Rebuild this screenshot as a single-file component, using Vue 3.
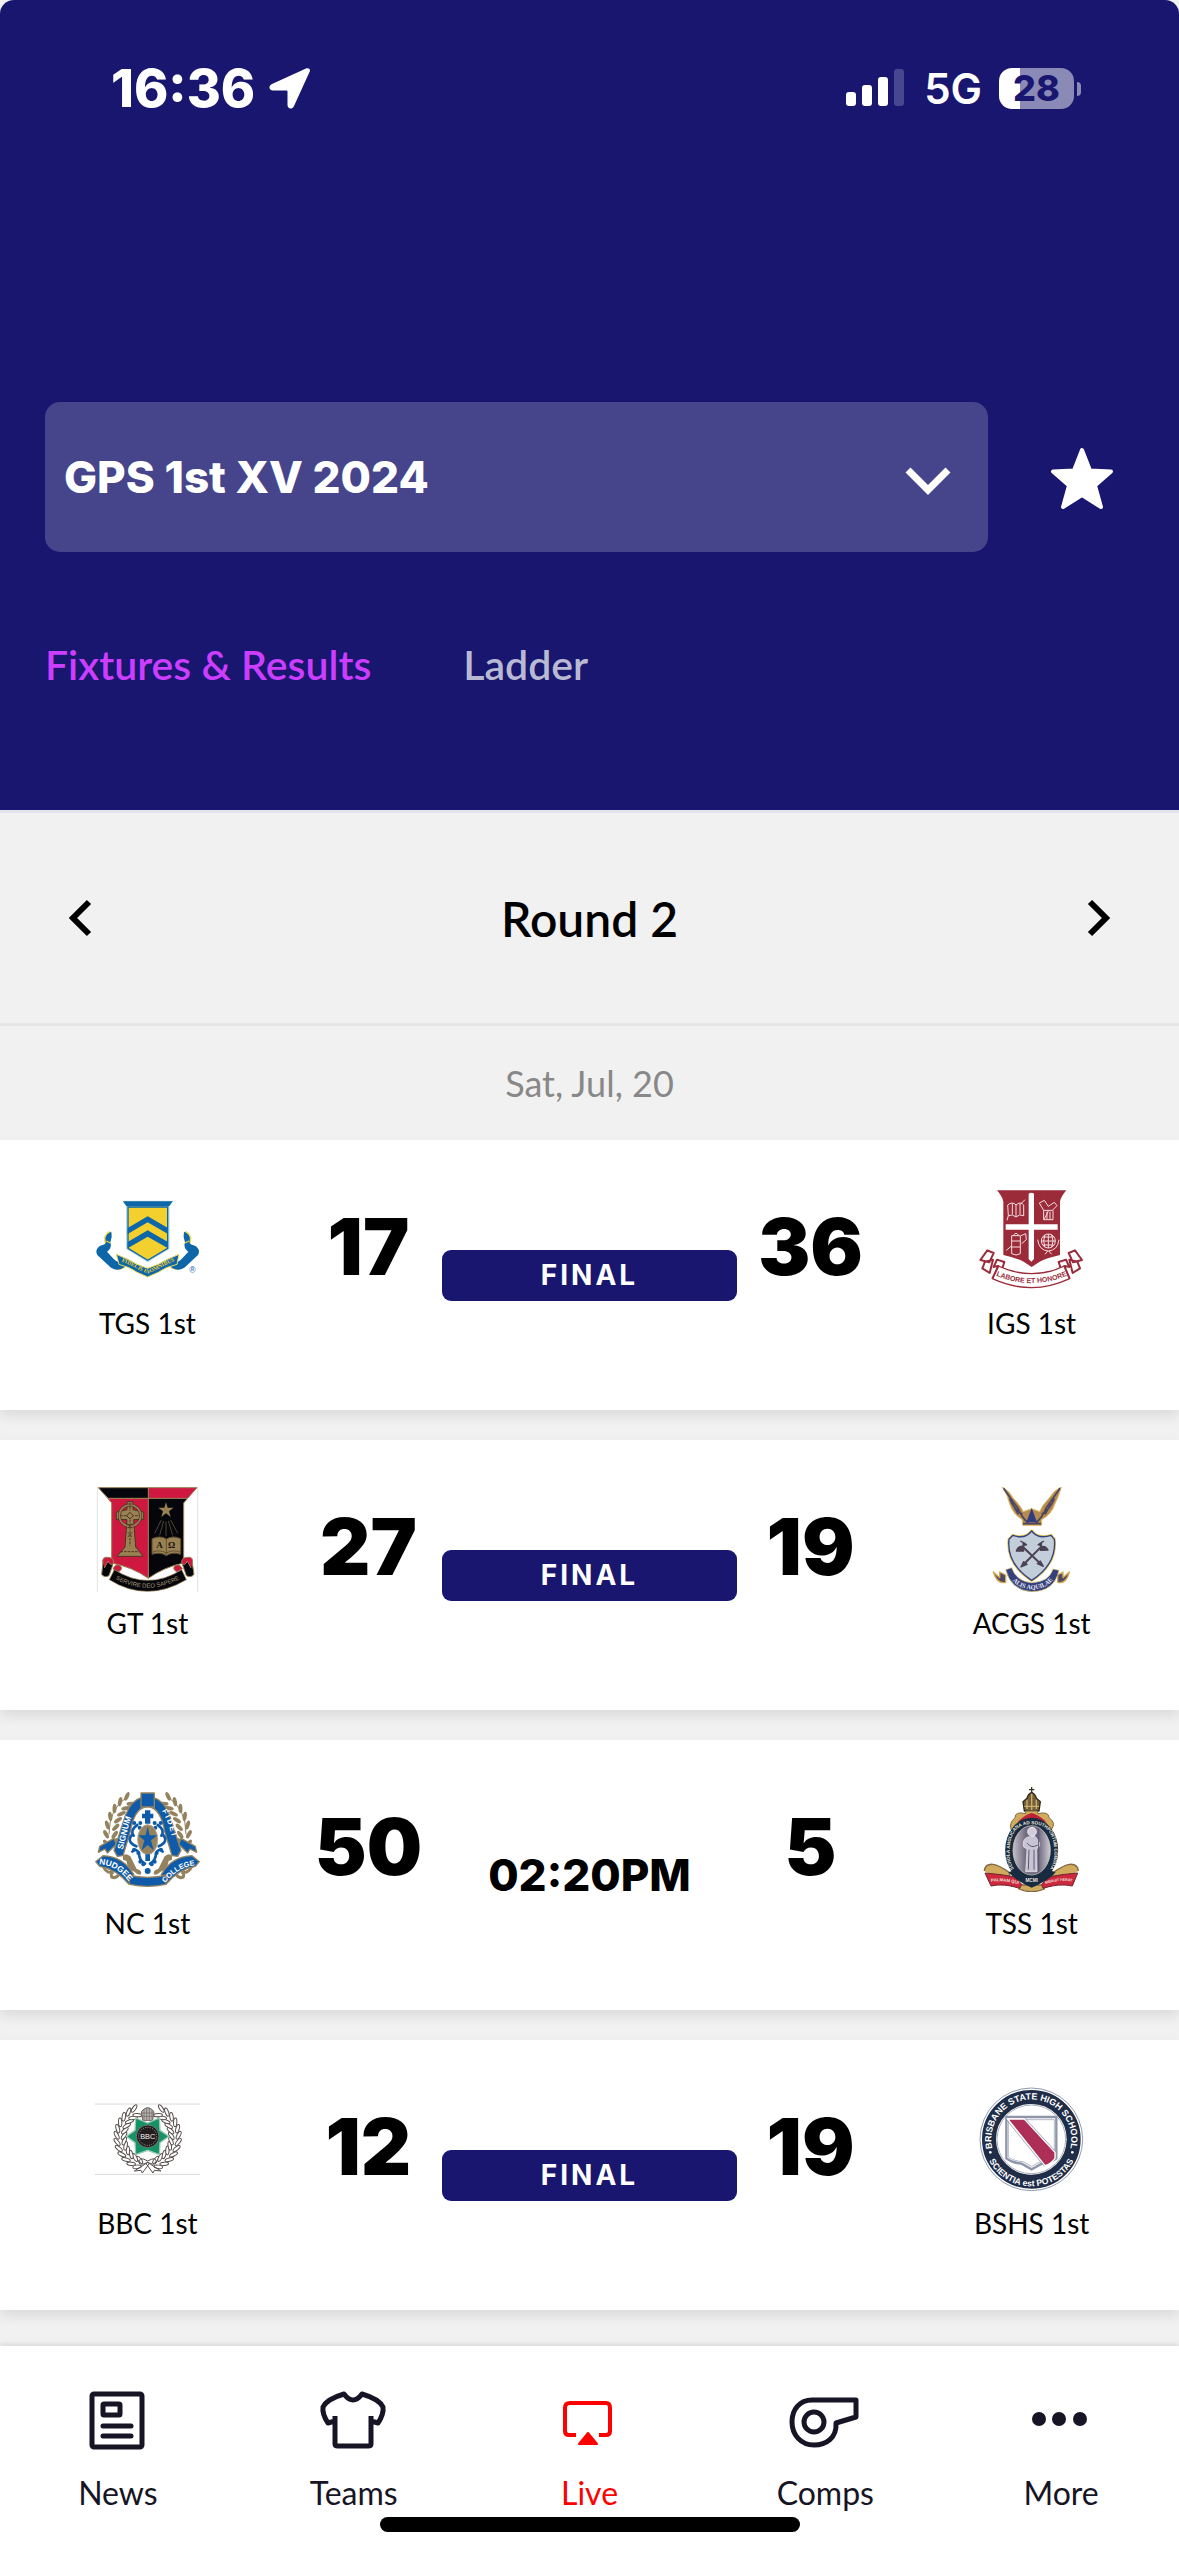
<script setup>
import { ref } from 'vue'

const competition = ref('GPS 1st XV 2024')

const fixtures = [
  { home: 'TGS', away: 'IGS', homeScore: 17, awayScore: 36, final: true },
  { home: 'GT', away: 'ACGS', homeScore: 27, awayScore: 19, final: true },
  { home: 'NC', away: 'TSS', homeScore: 50, awayScore: 5, final: false, time: '02:20PM' },
  { home: 'BBC', away: 'BSHS', homeScore: 12, awayScore: 19, final: true },
]

const navItems = ['News', 'Teams', 'Live', 'Comps', 'More']

// Leaves along an elliptical arc, alternating inside and outside of the stem.
function leaves(cx, cy, rx, ry, from, to, count, spread, lean) {
  const list = []
  for (let i = 0; i < count; i++) {
    const deg = from + ((to - from) * i) / (count - 1)
    const a = (deg * Math.PI) / 180
    const dir = Math.atan2(ry * Math.cos(a), -rx * Math.sin(a)) * (180 / Math.PI)
    for (const side of [-1, 1]) {
      const x = cx + (rx + side * spread) * Math.cos(a)
      const y = cy + (ry + side * spread) * Math.sin(a)
      list.push(`translate(${x.toFixed(1)} ${y.toFixed(1)}) rotate(${(dir - side * lean).toFixed(1)})`)
    }
  }
  return list
}
const nudgeeLeaves = leaves(158, 150, 112, 128, 172, 240, 7, 13, 32)
const bbcLeaves = leaves(158, 150, 82, 84, 110, 244, 12, 11, 30)
</script>

<template>
  <div class="app">
    <header class="header">
      <div class="status">
        <div class="status-left">
          <span class="clock">16:36</span>
          <svg class="location" viewBox="0 0 42 42" aria-hidden="true">
            <path d="M37 1.500 L3 17 C-1 19 0 23.500 4 23.500 L17.500 23.500 Q18.500 23.500 18.500 24.500 L18.500 38 C18.500 42 23 43 25 39 L40.500 5 C42 2 39.500 .5 37 1.500Z" fill="#fff" />
          </svg>
        </div>
        <div class="status-right">
          <svg class="signal" viewBox="0 0 58 38" aria-hidden="true">
            <rect x="0" y="23" width="10" height="14" rx="3" fill="#fff" />
            <rect x="16" y="16" width="10" height="21" rx="3" fill="#fff" />
            <rect x="32" y="8" width="10" height="29" rx="3" fill="#fff" />
            <rect x="48" y="0" width="10" height="37" rx="3" fill="#474790" />
          </svg>
          <span class="network">5G</span>
          <div class="battery"><span>28</span></div>
        </div>
      </div>

      <div class="picker-row">
        <div class="picker">
          <select v-model="competition" aria-label="Competition">
            <option>GPS 1st XV 2024</option>
          </select>
          <svg viewBox="0 0 46 30" aria-hidden="true"><path d="M3 4 L23 24 L43 4" fill="none" stroke="#fff" stroke-width="7" /></svg>
        </div>
        <button class="star" aria-label="Favourite">
          <svg viewBox="0 -2 64 64"><path d="M32 3 L40 23.500 L61 24.500 L45 38.500 L51 60 L32 48 L13 60 L19 38.500 L3 24.500 L24 23.500Z" fill="#fff" stroke="#fff" stroke-width="4" stroke-linejoin="round" /></svg>
        </button>
      </div>

      <nav class="tabs" aria-label="Sections">
        <a href="#fixtures" class="active">Fixtures &amp; Results</a>
        <a href="#ladder">Ladder</a>
      </nav>
    </header>

    <main>
      <div class="round">
        <button aria-label="Previous round"><svg viewBox="0 0 24 38"><path d="M21 3 L5 19 L21 35" fill="none" stroke="#000" stroke-width="6" /></svg></button>
        <h1>Round 2</h1>
        <button aria-label="Next round"><svg viewBox="0 0 24 38"><path d="M3 3 L19 19 L3 35" fill="none" stroke="#000" stroke-width="6" /></svg></button>
      </div>
      <p class="date">Sat, Jul, 20</p>

      <article v-for="m in fixtures" :key="m.home" class="card">
        <template v-for="side in ['home', 'away']" :key="side">
          <div class="team" :class="side">
            <svg class="crest" viewBox="0 0 315 315" aria-hidden="true">
              <g v-if="m[side] === 'TGS'">
                <g stroke="#f0dc5a" stroke-width="15" stroke-linejoin="round" fill="none">
                  <path d="M48 138 C25 150 38 164 38 176 L14 192 L56 236 Q74 248 90 232" />
                  <path d="M268 138 C291 150 278 164 278 176 L302 192 L260 236 Q242 248 226 232" />
                </g>
                <path d="M49 134 Q28 142 32 162 Q36 172 16 176 Q-2 188 7 204 L48 242 Q70 256 92 238 L80 226 Q66 228 54 214 L36 194 Q52 182 46 166 L50 150Z" fill="#0d66a8" />
                <path d="M267 134 Q288 142 284 162 Q280 172 300 176 Q318 188 309 204 L268 242 Q246 256 224 238 L236 226 Q250 228 262 214 L280 194 Q264 182 270 166 L266 150Z" fill="#0d66a8" />
                <path d="M34 162 L46 168 M282 162 L270 168" stroke="#f3d02d" stroke-width="4" />
                <path d="M64 202 Q104 218 126 232 L158 244 L190 232 Q212 218 252 202 L246 232 Q212 240 190 256 L158 270 L126 256 Q104 240 72 232Z" fill="#0d66a8" stroke="#f0dc5a" stroke-width="3" />
                <path id="tgs-motto" d="M73 222 Q115 236 130 248 L158 260 L186 248 Q205 236 245 220" fill="none" />
                <text class="serif" font-size="17" font-weight="700" fill="#f3d02d"><textPath href="#tgs-motto" startOffset="50%" text-anchor="middle">FIDELIS IN OMNIBUS</textPath></text>
                <path d="M84 43 H233 L222 57 V185 L158 224 L95 185 V57Z" fill="#d8efe9" stroke="#a6d6e4" stroke-width="3" />
                <path d="M84 43 H233 L222 58 H95Z" fill="#0d66a8" />
                <path d="M99 60 H218 V184 L158 220 L99 184Z" fill="#f3d02d" stroke="#0d66a8" stroke-width="4" />
                <path d="M98 123 L158 88 L219 123 V141 L158 106 L98 141Z M98 165 L158 130 L219 165 V184 L158 149 L98 184Z" fill="#0d66a8" />
                <text class="sans" x="283" y="257" font-size="26" fill="#0d66a8">®</text>
              </g>

              <g v-else-if="m[side] === 'IGS'" fill="none" stroke-linejoin="round">
                <path d="M54 10 H262 Q245 30 243 44 V204 Q200 214 182 224 L158 240 L134 224 Q116 214 73 204 V44 Q71 30 54 10Z" fill="#9c2b3a" />
                <path d="M149 20 Q157 14 165 20 V112 H236 V128 H165 V216 L157 224 L149 216 V128 H80 V112 H149Z" fill="#fff" />
                <g stroke="#f3dfe1" stroke-width="3">
                  <path d="M86 54 Q100 42 111 54 Q124 42 134 54 V86 Q121 80 111 90 Q100 80 88 86Z M111 54 V90 M100 50 V82 M123 50 V82 M124 52 L138 38 M88 86 L84 100" />
                  <path d="M181 48 L196 40 L208 58 L226 46 L234 56 L220 70 H194Z M194 70 V98 H222 V70 M204 74 V96 M213 74 V96 M196 96 L208 72" />
                  <path d="M98 146 H124 V200 Q111 208 98 200Z M98 162 H124 M98 180 H124 M104 144 Q111 134 118 144 M126 146 L140 140 L142 158 L128 170 M96 178 L82 190" />
                  <circle cx="208" cy="162" r="21" />
                  <path d="M187 162 H229 M208 141 V183 M192 150 H224 M192 174 H224 M198 143 Q190 162 198 181 M218 143 Q226 162 218 181 M176 158 Q180 190 208 192 Q236 190 240 158 M198 202 L206 192 M218 202 L210 192" />
                </g>
                <g stroke="#9c2b3a" stroke-width="6" fill="#fff">
                  <path d="M25 190 L44 198 L31 226 L4 219Z M18 224 L42 218 L32 258 L10 244Z M54 218 L76 225 L68 250 L44 240Z M288 190 L269 198 L282 226 L309 219Z M295 224 L271 218 L281 258 L303 244Z M261 218 L239 225 L247 250 L271 240Z" />
                  <path d="M58 237 Q108 260 158 260 Q208 260 256 237 L272 275 Q214 302 158 302 Q100 302 40 275Z" stroke-width="4" />
                  <path d="M42 240 L58 237 L40 275 M274 240 L256 237 L272 275" />
                </g>
                <path id="igs-motto" d="M54 267 Q158 309 261 267" />
                <text class="sans" font-size="21" fill="#9c2b3a" font-weight="700"><textPath href="#igs-motto" startOffset="50%" text-anchor="middle">LABORE ET HONORE</textPath></text>
              </g>

              <g v-else-if="m[side] === 'GT'" stroke-linejoin="round">
                <path d="M7 0 V315 M308 0 V315" stroke="#d5d5d5" stroke-width="2" />
                <path d="M10 2 H160 V34 H40Z" fill="#05050c" />
                <path d="M160 2 H306 L278 34 H160Z" fill="#cf183f" />
                <path d="M40 34 H160 V274 Q112 240 50 228 V48Z" fill="#cf183f" />
                <path d="M160 34 H278 L266 48 V228 Q208 240 160 274Z" fill="#05050c" />
                <path d="M10 2 H306 L266 48 V228 Q208 240 160 274 Q112 240 50 228 V48Z M160 2 V274 M40 34 H278" fill="none" stroke="#9a8152" stroke-width="3" />
                <g fill="#9a8152" stroke="#4d3426" stroke-width="3">
                  <path d="M96 44 H114 V68 L146 75 V97 L116 98 L122 180 L134 194 L144 208 H66 L78 194 L90 180 L96 98 L64 97 V75 L96 68Z" />
                  <circle cx="105" cy="86" r="32" fill="none" stroke-width="9" />
                  <circle cx="105" cy="86" r="32" fill="none" stroke="#9a8152" stroke-width="5" />
                  <path d="M105 48 V72 M105 98 V176 M76 86 H134 M76 194 H134 M98 110 L112 124 M112 110 L98 124 M98 136 L112 150 M112 136 L98 150" stroke-dasharray="8 3" />
                  <path d="M95 86 L105 76 L115 86 L105 96Z" />
                </g>
                <path d="M213 46 L218 62 L236 62 L222 73 L227 90 L213 79 L199 90 L204 73 L190 62 L208 62Z" fill="#9a8152" />
                <path d="M199 99 L179 139 M206 102 L194 145 M213 104 V148 M220 102 L233 145 M227 99 L248 139" stroke="#776442" stroke-width="2" />
                <path d="M171 155 Q196 144 214 156 Q234 144 257 155 V202 Q232 194 214 206 Q196 194 171 202Z" fill="#9a8152" stroke="#5b4b31" stroke-width="3" />
                <path d="M214 156 V204 M173 195 Q196 187 214 198 Q234 187 255 195" fill="none" stroke="#463a28" stroke-width="2" />
                <text class="serif" y="182" font-size="27" font-weight="700" fill="#15120d"><tspan x="184">A</tspan><tspan x="219">Ω</tspan></text>
                <g fill="#cf183f" stroke="#9a8152" stroke-width="3">
                  <path d="M25 215 L20 262 Q28 274 42 266 L54 232Z M290 215 L297 262 Q288 274 274 266 L262 232Z" fill="#05050c" />
                  <path d="M24 230 Q20 208 38 211 Q60 212 55 230 Q46 238 39 222 L28 243 M54 246 Q62 228 76 236 Q86 246 70 255Z M292 230 Q296 208 278 211 Q256 212 261 230 Q270 238 277 222 L288 243 M262 246 Q254 228 240 236 Q230 246 246 255Z" />
                </g>
                <path d="M58 248 Q108 280 158 280 Q210 280 260 248 L274 278 Q215 313 158 313 Q98 313 43 278Z" fill="#05050c" stroke="#9a8152" stroke-width="2" />
                <path id="gt-motto" d="M54 272 Q158 332 262 272" fill="none" />
                <text class="sans" font-size="18" fill="#a99873"><textPath href="#gt-motto" startOffset="50%" text-anchor="middle">SERVIRE DEO SAPERE</textPath></text>
              </g>

              <g v-else-if="m[side] === 'ACGS'" fill="none" stroke-linejoin="round">
                <path d="M70 0 Q92 12 103 34 Q128 60 132 74 L158 65 L182 74 Q188 56 210 34 Q226 8 247 0 Q238 32 228 50 Q218 82 188 98 V115 H130 V98 Q102 82 92 50 Q86 24 70 0Z" fill="#b68b50" stroke="#e0bb62" stroke-width="3" />
                <path d="M74 4 Q98 40 116 62 Q128 92 148 108 M243 4 Q218 40 202 62 Q190 92 170 108 M92 34 Q104 66 130 82 M226 34 Q214 66 188 82 M100 50 L118 82 M216 50 L198 82 M132 110 H186" stroke="#4a4466" stroke-width="5" />
                <path d="M158 63 L174 106 H142Z" fill="#303c7d" />
                <path d="M158 132 Q178 158 216 145 L226 157 Q234 230 158 280 Q82 230 90 157 L102 145 Q138 158 158 132Z" fill="#c3cedb" stroke="#e8c75c" stroke-width="9" />
                <path d="M158 132 Q178 158 216 145 L226 157 Q234 230 158 280 Q82 230 90 157 L102 145 Q138 158 158 132Z" fill="#c3cedb" stroke="#35417e" stroke-width="4" />
                <path d="M132 234 L190 176 M186 232 L128 176" stroke="#4b4054" stroke-width="6" />
                <path d="M176 174 L188 166 L184 190 L207 189 Q199 174 188 180 M144 174 L132 166 L134 192 L112 192 Q118 174 132 180 M126 240 L134 224 L144 232Z M193 238 L184 222 L175 230Z M124 162 L139 170 M195 162 L182 170" fill="#4b4054" stroke="#4b4054" stroke-width="4" />
                <path d="M43 255 L62 272 V255 L80 264 V286 Q54 292 43 255Z M271 255 L252 272 V255 L236 264 V286 Q262 292 271 255Z" fill="#4f4866" stroke="#d5a84f" stroke-width="4" />
                <path d="M80 248 L98 242 Q112 284 158 287 Q210 285 222 246 L240 250 Q226 314 158 314 Q96 310 80 248Z" fill="#35417e" stroke="#e5c66d" stroke-width="2" />
                <path id="acgs-motto" d="M86 258 Q108 306 160 307 Q218 304 234 254" />
                <text class="serif" font-size="19" fill="#e6e6f0" font-weight="700"><textPath href="#acgs-motto" startOffset="50%" text-anchor="middle">ALIS AQUILAE</textPath></text>
              </g>

              <g v-else-if="m[side] === 'NC'" fill="none" stroke-linejoin="round">
                <g v-for="flip in [false, true]" :key="flip" :transform="flip ? 'translate(315 0) scale(-1 1)' : ''">
                  <path d="M42 142 Q42 66 96 30" stroke="#94825f" stroke-width="3" />
                  <ellipse v-for="(t, i) in nudgeeLeaves" :key="i" rx="14" ry="6" fill="#94825f" :transform="t" />
                  <path d="M57 154 L14 178 L10 196 L30 186 L37 198 L64 172Z" fill="#0f5ba9" stroke="#94825f" stroke-width="4" />
                  <path d="M139 32 Q108 40 91 86 L57 190 L67 208 L84 206 L106 134 Q117 68 150 60Z" fill="#0f5ba9" stroke="#94825f" stroke-width="4" />
                  <path d="M84 206 Q92 196 106 208 L125 246 Q142 250 138 262 Q130 266 118 254 Q98 248 94 222 L84 218Z" fill="#94825f" />
                  <path d="M20 222 Q28 262 56 256 M66 250 Q44 240 50 270 Q64 276 72 262" stroke="#94825f" stroke-width="9" />
                  <path d="M2 224 L24 206 Q84 208 116 262 L102 292 Q64 246 14 238Z" fill="#0f5ba9" stroke="#94825f" stroke-width="4" />
                  <path d="M112 194 Q124 182 132 198 Q132 220 150 230 M127 114 Q104 128 116 146 M112 142 Q92 164 124 178" stroke="#0f5ba9" stroke-width="8" stroke-linecap="round" />
                  <circle v-for="p in [[118, 108], [136, 108], [134, 122], [117, 188], [130, 198], [136, 224], [145, 232]]" :key="p[0]" :cx="p[0]" :cy="p[1]" r="6" fill="#0f5ba9" />
                </g>
                <path d="M100 264 Q158 278 216 264 L212 292 Q158 304 104 292Z" fill="#0f5ba9" stroke="#94825f" stroke-width="4" />
                <rect x="138" y="18" width="40" height="42" fill="#0f5ba9" stroke="#94825f" stroke-width="4" />
                <path d="M150 70 H166 V80 H175 V94 H166 V110 H150 V94 H141 V80 H150Z" fill="#0f5ba9" />
                <ellipse cx="158" cy="158" rx="30" ry="45" fill="#94825f" stroke="#b5aa93" stroke-width="3" />
                <path d="M158 118 L164 145 L187 145 L168 160 L176 190 L158 174 L140 190 L148 160 L129 145 L152 145Z M151 202 H165 V222 H151Z" fill="#0f5ba9" />
                <circle cx="158" cy="252" r="9" fill="#0f5ba9" />
                <path id="nc-left" d="M83 188 L98 128 Q108 84 132 54" />
                <path id="nc-right" d="M198 66 Q218 100 227 134 L242 190" />
                <path id="nc-name" d="M10 232 Q68 234 106 290" />
                <path id="nc-college" d="M210 290 Q250 236 311 234" />
                <g class="sans" font-weight="700" fill="#fff">
                  <text font-size="25"><textPath href="#nc-left">SIGNUM</textPath></text>
                  <text font-size="22"><textPath href="#nc-right" startOffset="6">F I D E I</textPath></text>
                  <text font-size="25"><textPath href="#nc-name" startOffset="2">NUDGEE</textPath></text>
                  <text font-size="22"><textPath href="#nc-college" startOffset="2">COLLEGE</textPath></text>
                </g>
              </g>

              <g v-else-if="m[side] === 'TSS'" fill="none" stroke-linejoin="round">
                <path d="M158 0 V20 M150 8 H166" stroke="#3a3428" stroke-width="4" />
                <path d="M132 44 L144 34 Q146 22 158 16 Q170 22 172 34 L184 44 L180 72 H136Z" fill="#74613a" stroke="#30281b" stroke-width="4" />
                <path d="M158 20 V70 M144 38 V66 M172 38 V66 M136 58 H180" stroke="#cbb06c" stroke-width="4" />
                <path d="M140 72 H176 V80 Q210 72 210 92 Q232 108 218 126 L206 156 H110 L96 126 Q90 108 108 92 Q108 72 140 80Z" fill="#d0ab5d" stroke="#806a44" stroke-width="3" />
                <path d="M116 104 Q140 82 158 78 Q176 82 202 104Z" fill="#bd2236" />
                <path d="M16 252 Q18 230 42 232 Q60 234 90 256 L100 300 M298 252 Q296 230 272 232 Q254 234 224 256 L214 300" fill="#d0ab5d" stroke="#806a44" stroke-width="4" />
                <path d="M122 294 H192 L196 306 Q158 322 120 306Z" fill="#d0ab5d" stroke="#806a44" stroke-width="4" />
                <path d="M18 258 Q70 262 108 270 L128 292 L122 304 Q74 288 36 297Z M296 258 Q246 262 208 270 L188 292 L192 304 Q240 288 280 297Z" fill="#ce273e" stroke="#6d2830" stroke-width="3" />
                <path d="M88 256 Q112 282 158 302 Q208 282 230 256 L208 248 H110Z" fill="#192b40" />
                <defs>
                  <linearGradient id="tss-glass"><stop offset="0" stop-color="#ded9df" /><stop offset=".38" stop-color="#6e687e" /><stop offset=".65" stop-color="#6e687e" /><stop offset="1" stop-color="#f0edf0" /></linearGradient>
                </defs>
                <ellipse cx="158" cy="190" rx="68" ry="86" fill="url(#tss-glass)" stroke="#192b40" stroke-width="23" />
                <ellipse cx="158" cy="190" rx="56" ry="74" stroke="#c9c2b3" stroke-width="2" />
                <circle cx="159" cy="134" r="13" fill="#d1ccd9" stroke="#eeeaf1" stroke-width="3" />
                <path d="M146 150 Q128 158 134 180 L144 186 L140 254 H174 L173 186 Q190 176 176 158 L168 148Z" fill="#c9c4d4" stroke="#eeeaf1" stroke-width="2" />
                <path d="M144 168 Q157 186 176 174 M150 188 L148 248 M165 188 V248 M179 126 V250" stroke="#5e5873" stroke-width="3" />
                <path id="tss-ring" d="M115 256 Q88 232 92 190 Q94 110 158 112 Q222 110 226 190 Q228 234 203 256" />
                <path id="tss-left" d="M30 285 Q80 278 124 294" />
                <path id="tss-right" d="M191 294 Q236 276 289 285" />
                <g class="sans" fill="#e8e4dd" font-weight="700">
                  <text font-size="14"><textPath href="#tss-ring" startOffset="50%" text-anchor="middle">SCHOLA ANGLICANA AD SOUTHPORTUM CONDITA</textPath></text>
                  <text x="158" y="284" font-size="14" text-anchor="middle">MCMI</text>
                  <text font-size="13"><textPath href="#tss-left" startOffset="50%" text-anchor="middle">PALMAM QUI</textPath></text>
                  <text font-size="11"><textPath href="#tss-right" startOffset="50%" text-anchor="middle">MERUIT FERAT</textPath></text>
                </g>
              </g>

              <g v-else-if="m[side] === 'BBC'" fill="none">
                <path d="M0 51 H315 M0 262 H315" stroke="#d8d8d8" stroke-width="3" />
                <g v-for="flip in [false, true]" :key="flip" :transform="flip ? 'translate(316 0) scale(-1 1)' : ''">
                  <ellipse v-for="(t, i) in bbcLeaves" :key="i" rx="13" ry="5" stroke="#564d4b" stroke-width="3" fill="#fff" :transform="t" />
                  <path d="M158 222 Q130 206 132 228 Q138 236 158 226 L118 252 L138 250 L142 258 L164 228" stroke="#564d4b" stroke-width="3" />
                </g>
                <path d="M139 74 Q158 50 177 74 L173 100 H143Z" fill="#b8b4b2" stroke="#69605e" stroke-width="3" />
                <path d="M147 66 V98 M155 62 V98 M163 62 V98 M171 68 V96 M141 78 H175 M142 88 H174" stroke="#69605e" stroke-width="2" />
                <path d="M122 93 L158 108 L193 93 L195 130 L222 148 L195 167 L193 203 L158 190 L122 203 L120 167 L94 148 L120 130Z" fill="#159268" stroke="#9ac8b5" stroke-width="4" />
                <circle cx="158" cy="148" r="34" fill="#211c1d" stroke="#6d7a70" stroke-width="3" />
                <circle cx="158" cy="148" r="27" stroke="#a9a19d" stroke-width="3" stroke-dasharray="3 4" />
                <text class="sans" x="158" y="156" font-size="22" text-anchor="middle" fill="#f4f0f0">BBC</text>
              </g>

              <g v-else fill="none">
                <circle cx="157" cy="157" r="154" fill="#fff" stroke="#929bac" stroke-width="3" />
                <circle cx="157" cy="157" r="127" stroke="#1f2d48" stroke-width="42" />
                <circle cx="157" cy="157" r="103" stroke="#aab0bc" stroke-width="3" />
                <path d="M82 90 H232 V214 Q216 228 188 230 L158 247 L128 230 Q100 228 82 214Z" fill="#fff" stroke="#8e96aa" stroke-width="7" />
                <path d="M88 98 H226 V210 Q210 223 184 224 L158 238 L132 224 Q106 223 88 210Z" stroke="#8e96aa" stroke-width="2" />
                <path d="M86 96 H136 L228 196 V214 Q218 230 198 236Z" fill="#ad2e57" stroke="#fff" stroke-width="4" />
                <path d="M138 94 L230 194 M84 100 L196 238" stroke="#7582a0" stroke-width="2" />
                <path id="bshs-top" d="M40.500 186 A120 120 0 1 1 273.500 186" />
                <path id="bshs-bottom" d="M20 196 A143 143 0 0 0 294 196" />
                <g class="sans" fill="#fff" font-weight="700" text-anchor="middle">
                  <text font-size="27"><textPath href="#bshs-top" startOffset="50%">BRISBANE STATE HIGH SCHOOL</textPath></text>
                  <text font-size="26"><textPath href="#bshs-bottom" startOffset="50%">SCIENTIA est POTESTAS</textPath></text>
                </g>
                <circle cx="34" cy="196" r="4" fill="#fff" /><circle cx="280" cy="196" r="4" fill="#fff" />
              </g>
            </svg>
            <span>{{ m[side] }} 1st</span>
          </div>
          <strong class="score" :class="side + '-score'">{{ m[side + 'Score'] }}</strong>
        </template>
        <span v-if="m.final" class="badge">FINAL</span>
        <span v-else class="time">{{ m.time }}</span>
      </article>
    </main>

    <footer class="bottom">
      <nav aria-label="Main">
        <a v-for="item in navItems" :key="item" :href="'#' + item.toLowerCase()" :class="{ live: item === 'Live' }">
          <svg viewBox="0 0 72 60" fill="none" stroke="currentColor" stroke-width="5" stroke-linejoin="round" aria-hidden="true">
            <g v-if="item === 'News'">
              <rect x="10" y="4" width="50" height="53" rx="2" />
              <rect x="21" y="14" width="17" height="11" rx="1" />
              <path d="M21 36 H49 M21 46 H49" stroke-linecap="round" />
            </g>
            <path v-else-if="item === 'Teams'" d="M26 4 Q35 16 44 4 Q61 9 65 17 Q66 24 60 33 L53 31 V54 Q53 56 50 56 H20 Q17 56 17 54 V31 L10 33 Q4 24 5 17 Q9 9 26 4Z M53 31 V26 M17 31 V26" />
            <g v-else-if="item === 'Live'">
              <path d="M23 45 H16 Q12 45 12 41 V18 Q12 13 17 13 H53 Q57 13 57 18 V41 Q57 45 53 45 H46" stroke-width="4" />
              <path d="M35 43 L44 54 H26Z" fill="currentColor" stroke-width="2" />
            </g>
            <g v-else-if="item === 'Comps'">
              <path d="M23 10 H67 V27 L47 33 C48 48 37 55 25 55 C12 55 3 45 3 32 C3 19 11 10 23 10Z" />
              <circle cx="25" cy="32" r="10" />
            </g>
            <g v-else fill="currentColor" stroke="none">
              <circle cx="14" cy="29" r="7" /><circle cx="34" cy="29" r="7" /><circle cx="55" cy="29" r="7" />
            </g>
          </svg>
          <span>{{ item }}</span>
        </a>
      </nav>
      <div class="home-bar"></div>
    </footer>
  </div>
</template>

<style>
body {
  margin: 0;
  background: #f1f1f1;
}
</style>

<style scoped>
.app {
  min-height: 100vh;
  display: flex;
  flex-direction: column;
  background: #f1f1f1;
  color: #000;
  font-family: Lato, "Open Sans", sans-serif;
}
.app * {
  box-sizing: border-box;
}
button {
  border: 0;
  padding: 0;
  background: none;
  display: flex;
}
a {
  text-decoration: none;
}
.serif {
  font-family: "Liberation Serif", serif;
}
.sans {
  font-family: "Liberation Sans", sans-serif;
}
.header {
  background: #18166f;
  border-bottom: 3px solid #e2e2ec;
  border-radius: 14px 14px 0 0;
  padding: 58px 45px 120px;
  color: #fff;
}
.status {
  display: flex;
  justify-content: space-between;
  align-items: center;
  height: 60px;
  padding: 0 60px 0 66px;
  font-family: Inter, sans-serif;
}
.status-left,
.status-right {
  display: flex;
  align-items: center;
}
.status-left {
  gap: 14px;
}
.clock {
  font-size: 52px;
  font-weight: 800;
}
.location {
  width: 42px;
  height: 42px;
}
.signal {
  width: 58px;
  height: 38px;
  margin-right: 20px;
}
.network {
  font-size: 42px;
  font-weight: 600;
  margin-right: 17px;
}
.battery {
  position: relative;
  width: 75px;
  height: 41px;
  border-radius: 13px;
  background: linear-gradient(90deg, #fff 28%, #8b8ab7 28%);
  color: #18166f;
  font-size: 36px;
  font-weight: 800;
  line-height: 41px;
  text-align: center;
}
.battery::after {
  content: "";
  position: absolute;
  right: -7px;
  top: 14px;
  width: 4px;
  height: 14px;
  border-radius: 0 4px 4px 0;
  background: #8b8ab7;
}
.picker-row {
  display: flex;
  align-items: center;
  gap: 62px;
  margin-top: 284px;
  padding-right: 20px;
}
.picker {
  position: relative;
  flex: 1;
}
.picker select {
  appearance: none;
  display: block;
  width: 100%;
  height: 150px;
  border: 0;
  border-radius: 15px;
  padding: 0 19px;
  background: #46458c;
  color: #fff;
  font: 800 44px Inter, sans-serif;
}
.picker svg {
  position: absolute;
  right: 37px;
  top: 64px;
  width: 46px;
  height: 30px;
  pointer-events: none;
}
.star svg {
  width: 64px;
  height: 64px;
}
.tabs {
  display: flex;
  gap: 92px;
  margin-top: 88px;
  font-size: 41px;
  line-height: 50px;
  font-weight: 600;
}
.tabs a {
  color: #b9b9d4;
}
.tabs .active {
  color: #cc3dff;
}
main {
  flex: 1;
}
.round {
  display: flex;
  align-items: center;
  justify-content: space-between;
  height: 213px;
  padding: 0 68px;
  border-bottom: 3px solid #e6e6e6;
}
.round h1 {
  margin: 0;
  font-size: 48px;
  font-weight: 600;
}
.round svg {
  width: 24px;
  height: 38px;
}
.date {
  margin: 0;
  padding: 36px 0;
  font-size: 36px;
  line-height: 42px;
  text-align: center;
  color: #888;
}
.card {
  display: grid;
  grid-template-columns: 2fr 1fr 2fr 1fr 2fr;
  grid-template-areas: "home hs mid as away";
  align-items: start;
  padding: 47px 0 66px;
  margin-bottom: 30px;
  background: #fff;
  box-shadow: 0 6px 12px rgba(0, 0, 0, 0.09);
}
.team {
  display: flex;
  flex-direction: column;
  align-items: center;
  gap: 10px;
  font-size: 28px;
  line-height: 42px;
}
.home {
  grid-area: home;
}
.away {
  grid-area: away;
}
.crest {
  width: 105px;
  height: 105px;
}
.score {
  font-family: Inter, sans-serif;
  font-size: 78px;
  font-weight: 900;
  line-height: 120px;
  text-align: center;
}
.home-score {
  grid-area: hs;
}
.away-score {
  grid-area: as;
}
.badge,
.time {
  grid-area: mid;
  margin-top: 63px;
  font-family: Inter, sans-serif;
  line-height: 51px;
  text-align: center;
}
.badge {
  border-radius: 9px;
  background: #18166f;
  color: #fff;
  font-size: 28px;
  font-weight: 700;
  letter-spacing: 3px;
}
.time {
  font-size: 44px;
  font-weight: 800;
}
.bottom {
  position: sticky;
  bottom: 0;
  background: #fff;
  box-shadow: 0 -2px 5px rgba(0, 0, 0, 0.1);
  padding: 44px 0 24px;
}
.bottom nav {
  display: grid;
  grid-template-columns: repeat(5, 1fr);
}
.bottom a {
  display: flex;
  flex-direction: column;
  align-items: center;
  gap: 25px;
  color: #161425;
  font-size: 32px;
  line-height: 36px;
}
.bottom a.live {
  color: #f00;
}
.bottom a svg {
  width: 72px;
  height: 60px;
}
.home-bar {
  width: 420px;
  height: 15px;
  margin: 6px auto 0;
  border-radius: 8px;
  background: #000;
}
</style>
